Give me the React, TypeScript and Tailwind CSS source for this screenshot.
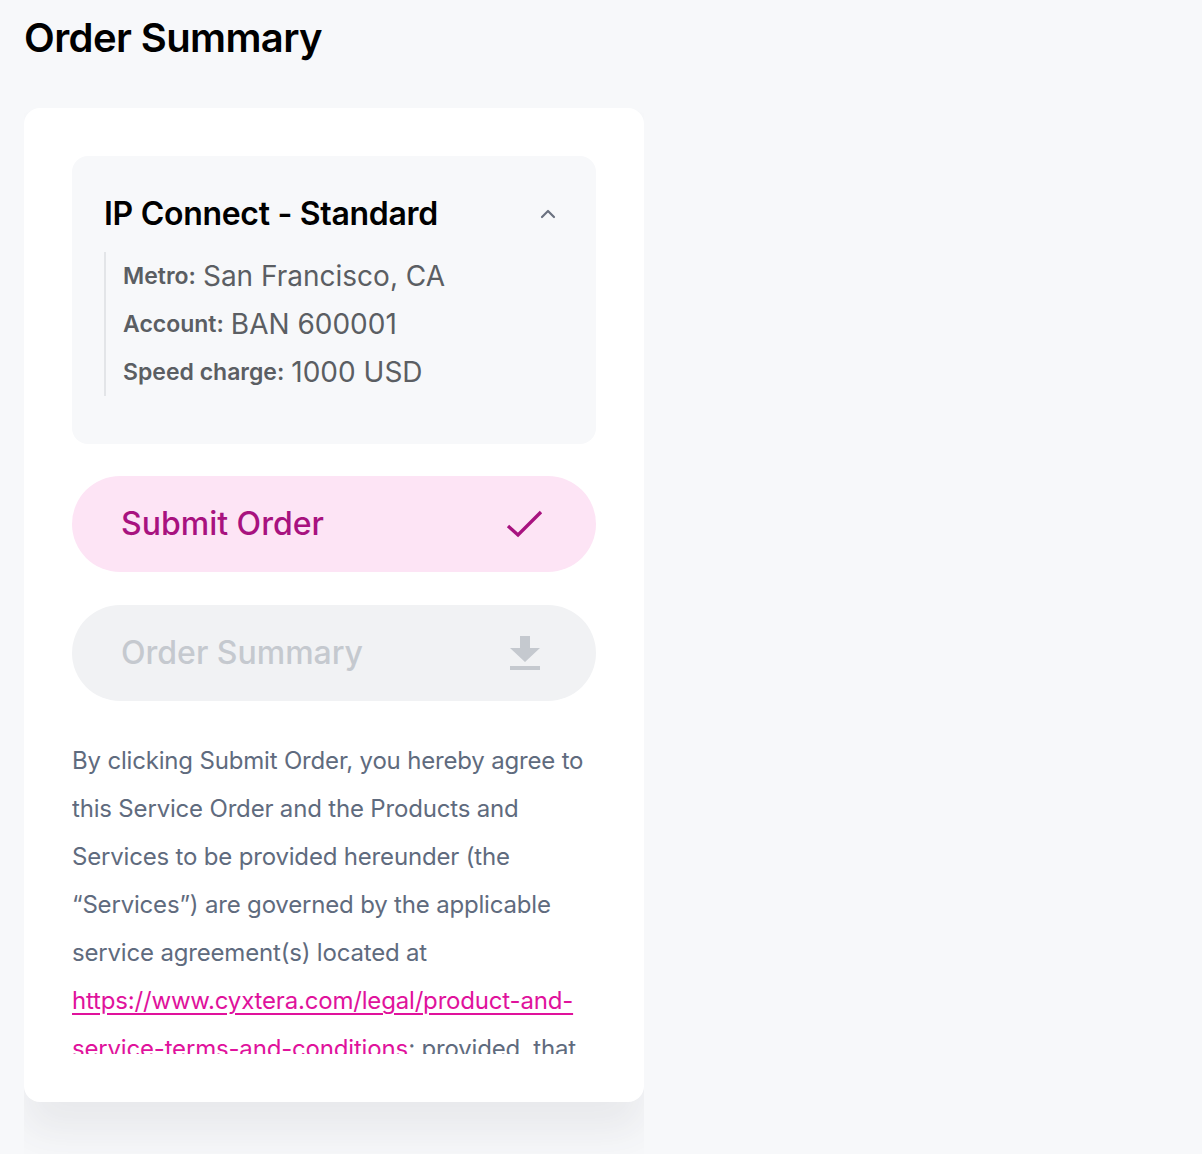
import { ChevronUp } from 'lucide-react';

const font = { fontFamily: 'Inter, "Noto Sans", sans-serif' };

function DetailRow({ label, value }: { label: string; value: string }) {
  return (
    <div className="h-12 flex items-center text-[#5b5e63]">
      <span className="text-[23px] font-semibold">{label}:</span>
      <span className="text-[28px] ml-[7px]">{value}</span>
    </div>
  );
}

export default function App() {
  return (
    <div className="min-h-[1154px] bg-[#f7f8fa]" style={font}>
      <div className="w-[644px] pl-6">
        <h1 className="pt-[14px] text-[40px] leading-[48px] font-semibold text-black tracking-[-0.6px]">
          Order Summary
        </h1>

        {/* card + its bottom shadow, clipped to the column */}
        <div className="mt-[46px] pb-16 overflow-hidden">
          <div className="bg-white rounded-2xl px-12 py-12 shadow-[0_30px_40px_rgba(60,70,80,0.08)]">
            <div className="h-[898px] overflow-hidden">
              {/* product block */}
              <div className="bg-[#f7f8fa] rounded-2xl pl-[32px] pr-[36px] pt-[38px] pb-[48px]">
                <div className="flex items-center justify-between">
                  <h2 className="text-[32px] leading-[40px] font-semibold text-black tracking-[-0.3px]">
                    IP Connect - Standard
                  </h2>
                  <ChevronUp className="w-6 h-6 text-[#6b7280]" strokeWidth={2.2} />
                </div>
                <div className="mt-[18px] border-l-2 border-[#e3e5e8] pl-[17px]">
                  <DetailRow label="Metro" value="San Francisco, CA" />
                  <DetailRow label="Account" value="BAN 600001" />
                  <DetailRow label="Speed charge" value="1000 USD" />
                </div>
              </div>

              {/* actions */}
              <button className="mt-8 w-full h-24 rounded-full bg-[#fde4f5] flex items-center justify-between pl-[49px] pr-[52px]">
                <span className="text-[32px] font-medium text-[#a8127f]">Submit Order</span>
                <svg width="38" height="32" viewBox="0 0 38 32" fill="none">
                  <path d="M2 18 L12 27 L35 4" stroke="#a8127f" strokeWidth="3.4" />
                </svg>
              </button>

              <button className="mt-[33px] w-full h-24 rounded-full bg-[#f1f2f4] flex items-center justify-between pl-[49px] pr-[56px]">
                <span className="text-[32px] font-medium text-[#c5c9cf]">Order Summary</span>
                <svg width="30" height="34" viewBox="0 0 30 34">
                  <path d="M10 0 H20 V12 H30 L15 26 L0 12 H10 Z" fill="#c5c9cf" />
                  <rect x="0" y="30" width="30" height="4" fill="#c5c9cf" />
                </svg>
              </button>

              <p className="mt-[36px] text-[24px] leading-[48px] text-[#5f6b7e] tracking-[-0.18px]">
                By clicking Submit Order, you hereby agree to this Service Order and the Products and
                Services to be provided hereunder (the “Services”) are governed by the applicable
                service agreement(s) located at{' '}
                <a href="#" className="text-[#e0129c] underline underline-offset-4">
                  https://www.cyxtera.com/legal/product-and-service-terms-and-conditions
                </a>
                ; provided, that, in the event of any conflict between the terms of this Service
                Order and the terms of the applicable service agreement, the terms of this Service
                Order shall control.
              </p>
            </div>
          </div>
        </div>
      </div>
    </div>
  );
}
